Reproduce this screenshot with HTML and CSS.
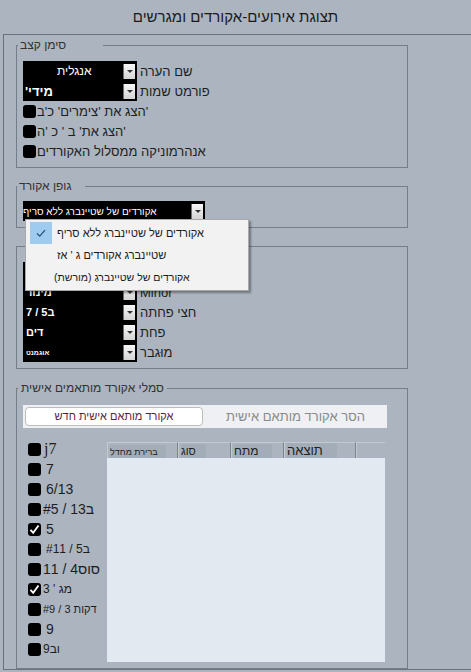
FILE: index.html
```html
<!DOCTYPE html>
<html lang="he">
<head>
    <meta charset="UTF-8">
    <meta name="viewport" content="width=device-width, initial-scale=1.0">
    <title>תצוגת אירועים-אקורדים ומגרשים</title>
    <link rel="stylesheet" href="styles.css">
</head>
<body>
    <h1 class="title" dir="rtl">תצוגת אירועים-אקורדים ומגרשים</h1>
    <div class="frame">
        <fieldset class="group">
            <legend class="legend-notes">סימן קצב</legend>
            <div class="field">
                <div class="combo"><span class="combo-text text-center">אנגלית</span><span class="arrow"></span></div>
                <span class="field-label" dir="rtl">שם הערה</span>
            </div>
            <div class="field">
                <div class="combo"><span class="combo-text text-bold" dir="rtl">מידי'</span><span class="arrow"></span></div>
                <span class="field-label" dir="rtl">פורמט שמות</span>
            </div>
            <div class="check-row"><span class="box"></span><span dir="rtl">'הצג את 'צימרים' כ'ב</span></div>
            <div class="check-row"><span class="box"></span><span dir="rtl">'הצג את' ב ' כ 'ה</span></div>
            <div class="check-row"><span class="box"></span><span dir="rtl">אנהרמוניקה ממסלול האקורדים</span></div>
        </fieldset>

        <fieldset class="group group-font">
            <legend class="legend-font">גופן אקורד</legend>
            <div class="combo combo-wide">
                <span class="combo-text combo-text-font">אקורדים של שטיינברג ללא סריף</span><span class="arrow"></span>
                <div class="menu">
                    <div class="menu-item">
                        <span class="menu-check menu-check-on">
                            <svg width="22" height="22" viewBox="0 0 22 22"><path d="M7 11.5 L9.8 14.2 L15 8.2" fill="none" stroke="#2a4f78" stroke-width="1.2"/></svg>
                        </span>
                        <span>אקורדים של שטיינברג ללא סריף</span>
                    </div>
                    <div class="menu-item">
                        <span class="menu-check"></span>
                        <span dir="rtl">שטיינברג אקורדים ג ' אז</span>
                    </div>
                    <div class="menu-item menu-item-small">
                        <span class="menu-check"></span>
                        <span dir="rtl">אקורדִים של שטיינברגַ (מורשת)</span>
                    </div>
                </div>
            </div>
        </fieldset>

        <fieldset class="group">
            <legend class="legend-types"></legend>
            <div class="field">
                <div class="combo"><span class="combo-text"></span><span class="arrow"></span></div>
            </div>
            <div class="field">
                <div class="combo"><span class="combo-text text-small">מינור</span><span class="arrow"></span></div>
                <span class="field-label">Minor</span>
            </div>
            <div class="field">
                <div class="combo"><span class="combo-text text-small" dir="rtl">ב5 / 7</span><span class="arrow"></span></div>
                <span class="field-label" dir="rtl">חצי פחתה</span>
            </div>
            <div class="field">
                <div class="combo"><span class="combo-text text-small" dir="rtl">דים</span><span class="arrow"></span></div>
                <span class="field-label" dir="rtl">פחת</span>
            </div>
            <div class="field">
                <div class="combo"><span class="combo-text text-tiny" dir="rtl">אוגמנט</span><span class="arrow"></span></div>
                <span class="field-label" dir="rtl">מוּגבר</span>
            </div>
        </fieldset>

        <fieldset class="group group-custom">
            <legend class="legend-custom">סמלי אקורד מותאמים אישית</legend>
            <div class="strip">
                <div class="btn-new" dir="rtl">אקורד מותאם אישית חדש</div>
                <div class="btn-remove" dir="rtl">הסר אקורד מותאם אישית</div>
            </div>
            <div class="chords">
                <div class="chord-list">
                    <div class="chord-row"><span class="box"></span><span class="serif">j7</span></div>
                    <div class="chord-row"><span class="box"></span><span class="pad">7</span></div>
                    <div class="chord-row"><span class="box"></span><span class="pad">6/13</span></div>
                    <div class="chord-row"><span class="box"></span><span dir="rtl">ב13 / #5</span></div>
                    <div class="chord-row"><span class="box"><svg width="13" height="13" viewBox="0 0 13 13"><path d="M2.5 6.8 L5.2 9.8 L10.5 2.5" fill="none" stroke="#fff" stroke-width="1.8"/></svg></span><span class="pad">5</span></div>
                    <div class="chord-row"><span class="box"></span><span class="pad small" dir="rtl">ב5 / #11</span></div>
                    <div class="chord-row"><span class="box"></span><span dir="rtl">סוס4 / 11</span></div>
                    <div class="chord-row"><span class="box"><svg width="13" height="13" viewBox="0 0 13 13"><path d="M2.5 6.8 L5.2 9.8 L10.5 2.5" fill="none" stroke="#fff" stroke-width="1.8"/></svg></span><span class="small" dir="rtl">מג ' 3</span></div>
                    <div class="chord-row"><span class="box"></span><span class="smaller" dir="rtl">דקות 3 / #9</span></div>
                    <div class="chord-row"><span class="box"></span><span class="pad">9</span></div>
                    <div class="chord-row"><span class="box"></span><span class="small" dir="rtl">וב9</span></div>
                </div>
                <div class="table">
                    <div class="thead">
                        <div class="th th-default"><span class="th-label th-tiny">ברירת מחדל</span></div>
                        <div class="th th-type"><span class="th-label th-sm">סוג</span></div>
                        <div class="th th-tension"><span class="th-label th-md">מתח</span></div>
                        <div class="th th-result"><span class="th-label">תוצאה</span></div>
                        <div class="th th-rest"></div>
                    </div>
                    <div class="tbody"></div>
                </div>
            </div>
        </fieldset>
    </div>
</body>
</html>
```

FILE: styles.css
```css
body {
    margin: 0;
    height: 672px;
    overflow: hidden;
    background: #abb4bf;
    color: #1e1e1e;
    font-family: "Liberation Sans", "DejaVu Sans", sans-serif;
    font-size: 13px;
}
.title {
    margin: 0;
    height: 34px;
    line-height: 34px;
    text-align: center;
    font-size: 15px;
    font-weight: normal;
    color: #1a1a1a;
}
.frame {
    margin-left: 3px;
    height: 636px;
    box-sizing: border-box;
    border: 1px solid #68717c;
    border-right: none;
    padding: 3px 0 0 12px;
}
.group {
    width: 392px;
    box-sizing: border-box;
    min-width: 0;
    margin: 0 0 11px;
    border: 1px solid #747e8a;
    padding: 8px 0 6px 6px;
}
.group-font {
    padding-top: 7px;
}
.group-custom {
    margin-top: 12px;
    padding-top: 9px;
}
legend {
    height: 15px;
    line-height: 15px;
    font-size: 12px;
    color: #333;
    margin-left: -5px;
    padding: 0 37px 0 2px;
}
.legend-font {
    margin-left: -6px;
    padding-right: 13px;
}
.legend-types {
    margin-left: 6px;
    width: 60px;
}
.legend-custom {
    padding-left: 3px;
    padding-right: 3px;
}
.field {
    display: flex;
    align-items: center;
    height: 20px;
}
.field-label {
    margin-left: 3px;
    font-size: 13px;
}
.combo {
    display: flex;
    align-items: center;
    width: 114px;
    height: 20px;
    box-sizing: border-box;
    padding-right: 2px;
    background: #000;
    color: #fff;
}
.combo-wide {
    position: relative;
    width: 182px;
}
.combo-text {
    flex: 1;
    padding-left: 2px;
    font-size: 12px;
    text-align: left;
    white-space: nowrap;
    overflow: hidden;
}
.combo-text-font {
    padding-left: 0;
    font-size: 10px;
}
.text-center {
    padding-left: 34px;
}
.text-bold {
    font-weight: bold;
    font-size: 13px;
}
.text-small {
    font-weight: bold;
    font-size: 11px;
    padding-left: 3px;
}
.text-tiny {
    font-weight: bold;
    font-size: 7px;
    padding-left: 3px;
}
.arrow {
    display: flex;
    align-items: center;
    justify-content: center;
    width: 11px;
    height: 15px;
    border-left: 1px solid #6f6f6f;
    background: linear-gradient(#f7f7f7, #d4d4d4);
}
.arrow::after {
    content: "";
    border-left: 3px solid transparent;
    border-right: 3px solid transparent;
    border-top: 3px solid #333;
}
.check-row {
    display: flex;
    align-items: center;
    height: 20px;
    gap: 1px;
}
.box {
    display: flex;
    align-items: center;
    justify-content: center;
    flex: none;
    width: 13px;
    height: 13px;
    border-radius: 3px;
    background: #000;
}

/* dropdown of the chord font */
.menu {
    position: absolute;
    top: 18px;
    left: 2px;
    z-index: 5;
    width: 224px;
    height: 72px;
    box-sizing: border-box;
    padding: 2px 0 0 4px;
    background: #f2f2f2;
    border: 1px solid #a9a9a9;
    box-shadow: 2px 2px 2px rgba(0, 0, 0, 0.35);
    color: #1a1a1a;
}
.menu-item {
    display: flex;
    align-items: center;
    gap: 5px;
    height: 22px;
    font-size: 11px;
}
.menu-item-small {
    font-size: 10.5px;
    gap: 2px;
}
.menu-check {
    width: 22px;
    height: 22px;
    flex: none;
}
.menu-check-on {
    background: #9fcbf1;
}

/* custom chord symbols */
.strip {
    display: flex;
    width: 364px;
    height: 23px;
    box-sizing: border-box;
    padding: 2px 1px 2px 2px;
    background: #eef0f3;
}
.btn-new {
    width: 178px;
    box-sizing: border-box;
    border: 1px solid #bcbcbc;
    border-radius: 4px;
    background: #fff;
    color: #5a1f3e;
    font-size: 11px;
    line-height: 17px;
    text-align: center;
}
.btn-remove {
    flex: 1;
    margin-left: 2px;
    color: #8a8a8a;
    font-size: 13px;
    line-height: 19px;
    text-align: center;
}
.chords {
    display: flex;
    margin-top: 11px;
}
.chord-list {
    width: 79px;
    padding-left: 5px;
}
.chord-row {
    display: flex;
    align-items: center;
    gap: 2px;
    height: 20px;
    font-size: 14px;
}
.chord-row .pad {
    margin-left: 3px;
}
.chord-row .small {
    font-size: 12px;
}
.chord-row .smaller {
    font-size: 11px;
}
.serif {
    font-family: "Liberation Serif", serif;
    font-size: 16px;
    margin-left: 1px;
}
.table {
    display: flex;
    flex-direction: column;
    width: 278px;
    height: 220px;
    margin-top: 3px;
}
.thead {
    display: flex;
    height: 16px;
}
.th {
    box-sizing: border-box;
    height: 16px;
    padding-left: 2px;
    border-top: 1px solid #c3cad2;
    border-right: 1px solid #7a838e;
    border-left: 1px solid #c3cad2;
}
.th-default { width: 71px; }
.th-type { width: 53px; }
.th-tension { width: 53px; }
.th-result { width: 72px; }
.th-rest { width: 29px; border-right: none; }
.th-label {
    display: inline-block;
    height: 17px;
    padding-right: 14px;
    background: #a3adb8;
    font-size: 13px;
    line-height: 15px;
    color: #222;
}
.th-tiny { font-size: 9px; padding-right: 8px; }
.th-sm { font-size: 11px; padding-right: 10px; }
.th-md { font-size: 12px; }
.tbody {
    flex: 1;
    background: #e3e9f1;
}
```
